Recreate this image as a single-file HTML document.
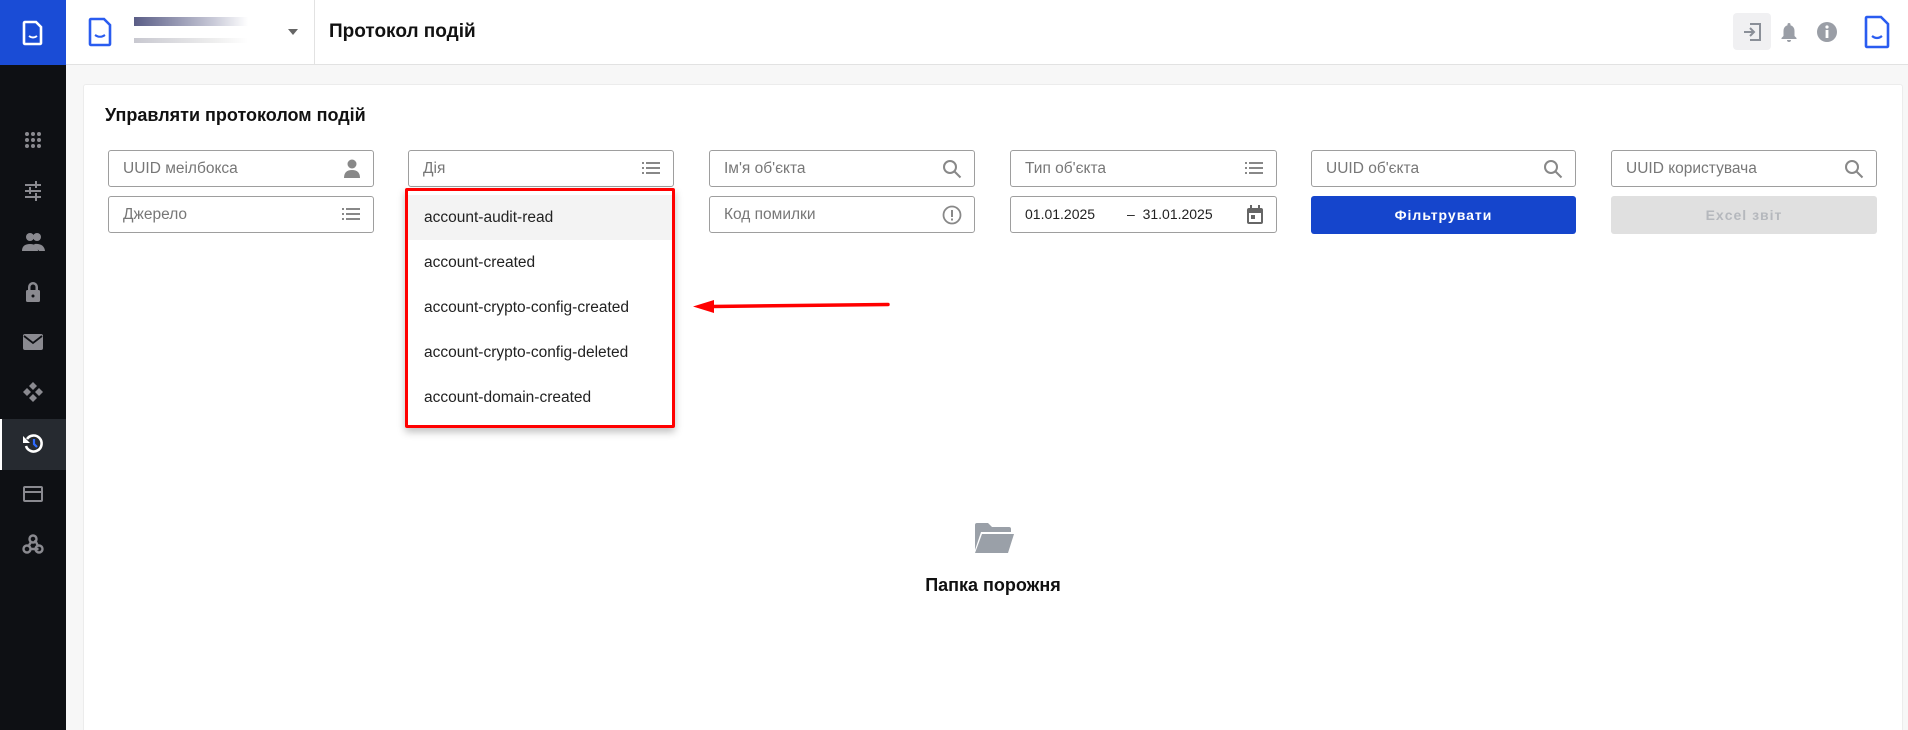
<!DOCTYPE html>
<html><head><meta charset="utf-8"><style>
*{box-sizing:border-box;margin:0;padding:0}
html,body{width:1908px;height:730px;overflow:hidden}
body{background:#f7f7f7;font-family:"Liberation Sans",Roboto,sans-serif;position:relative;color:#222}
.abs{position:absolute}
.sb{left:0;top:0;width:66px;height:730px;background:#0e1014}
.sbtop{left:0;top:0;width:66px;height:65px;background:#1a4cd6}
.hdr{left:66px;top:0;width:1842px;height:65px;background:#fff;border-bottom:1px solid #e2e2e2}
.card{left:83px;top:84px;width:1820px;height:660px;background:#fff;border:1px solid #ececec;border-radius:3px}
.f{position:absolute;height:37px;border:1px solid #9e9e9e;border-radius:3px;background:#fff;font-size:15.5px;color:#777;padding-left:14px;line-height:35px}
.f svg{position:absolute;right:12px;top:8px}
.si{position:absolute;left:22px}
.item{position:absolute;left:3px;width:264px;height:45px;line-height:45px;padding-left:16px;font-size:15.5px;color:#222}
</style></head><body>
<div class="abs sb"></div>
<div class="abs sbtop"></div>
<svg class="abs" style="left:22px;top:20px" width="22" height="26" viewBox="0 0 22 26"><path d="M3 2h11l5 5v16a1 1 0 0 1-1 1H3a1 1 0 0 1-1-1V3a1 1 0 0 1 1-1z" fill="none" stroke="#fff" stroke-width="2.6"/><path d="M7 16q4 3 8 0" fill="none" stroke="#fff" stroke-width="2"/></svg>
<div class="abs" style="left:0;top:419px;width:66px;height:51px;background:#262a30;border-left:2px solid #fff"></div>
<svg class="abs si" style="top:130px" width="22" height="20" viewBox="0 0 22 20" fill="#8a8a90"><g><circle cx="5" cy="4" r="2"/><circle cx="11" cy="4" r="2"/><circle cx="17" cy="4" r="2"/><circle cx="5" cy="10" r="2"/><circle cx="11" cy="10" r="2"/><circle cx="17" cy="10" r="2"/><circle cx="5" cy="16" r="2"/><circle cx="11" cy="16" r="2"/><circle cx="17" cy="16" r="2"/></g></svg>
<svg class="abs si" style="top:181px" width="22" height="20" viewBox="0 0 22 20" fill="#8a8a90"><rect x="3" y="3" width="16" height="2"/><rect x="13" y="0" width="2" height="7"/><rect x="3" y="9" width="16" height="2"/><rect x="7" y="6" width="2" height="7"/><rect x="3" y="15" width="16" height="2"/><rect x="13" y="12" width="2" height="8"/></svg>
<svg class="abs si" style="top:232px" width="24" height="20" viewBox="0 0 24 20" fill="#8a8a90"><circle cx="8" cy="5" r="4"/><circle cx="15" cy="5" r="4"/><path d="M0 19q0-7 8-7t8 7z"/><path d="M12 12q10-1 11 7h-6z"/></svg>
<svg class="abs si" style="top:281px" width="22" height="22" viewBox="0 0 22 22" fill="#8a8a90"><path d="M6 9V6a5 5 0 0 1 10 0v3h-2.5V6a2.5 2.5 0 0 0-5 0v3z"/><rect x="4" y="9" width="14" height="12" rx="1.5"/><circle cx="11" cy="15" r="1.5" fill="#0e1014"/></svg>
<svg class="abs si" style="top:333px" width="22" height="18" viewBox="0 0 22 18" fill="#8a8a90"><rect x="1" y="1" width="20" height="16" rx="2"/><path d="M2 3l9 7 9-7" fill="none" stroke="#0e1014" stroke-width="1.8"/></svg>
<svg class="abs si" style="top:381px" width="22" height="22" viewBox="0 0 22 22" fill="#8a8a90"><path d="M11 1l4 4-4 4-4-4zM11 13l4 4-4 4-4-4zM1 11l4-4 4 4-4 4zM13 11l4-4 4 4-4 4z"/></svg>
<svg class="abs si" style="top:433px" width="22" height="22" viewBox="0 0 22 22"><path d="M5 6a8 8 0 1 1-1 7" fill="none" stroke="#fff" stroke-width="2.6"/><path d="M1 3v7h7z" fill="#fff"/><path d="M12 6v5l3 3" fill="none" stroke="#2f6bff" stroke-width="2.2"/></svg>
<svg class="abs si" style="top:485px" width="22" height="18" viewBox="0 0 22 18" fill="#8a8a90"><rect x="1" y="1" width="20" height="16" rx="2"/><rect x="3" y="3" width="16" height="3" fill="#0e1014"/><rect x="3" y="8" width="16" height="7" fill="#0e1014"/></svg>
<svg class="abs si" style="top:533px" width="22" height="22" viewBox="0 0 22 22" fill="none" stroke="#8a8a90" stroke-width="2.4"><circle cx="11" cy="6" r="3.5"/><circle cx="5" cy="16" r="3.5"/><circle cx="17" cy="16" r="3.5"/><path d="M9 9l-3 5M8.5 16h8M13 7l3 6"/></svg>

<div class="abs hdr"></div>
<svg class="abs" style="left:88px;top:17px" width="24" height="30" viewBox="0 0 24 30"><path d="M3 2h13l6 6v19a1 1 0 0 1-1 1H3a1 1 0 0 1-1-1V3a1 1 0 0 1 1-1z" fill="none" stroke="#2a5cf0" stroke-width="2.6"/><path d="M7 18q5 3.5 10 0" fill="none" stroke="#2a5cf0" stroke-width="2"/></svg>
<div class="abs" style="left:134px;top:17px;width:114px;height:9px;background:linear-gradient(90deg,#5a5d86,#c9cad8 70%,#fff)"></div>
<div class="abs" style="left:134px;top:38px;width:114px;height:5px;background:linear-gradient(90deg,#c8c8d0,#eee 70%,#fff)"></div>
<svg class="abs" style="left:287px;top:28px" width="12" height="8"><path d="M1 1h10L6 7z" fill="#666"/></svg>
<div class="abs" style="left:314px;top:0;width:1px;height:65px;background:#e2e2e2"></div>
<div class="abs" style="left:329px;top:21px;font-size:19px;font-weight:bold;color:#111">Протокол подій</div>
<div class="abs" style="left:1733px;top:13px;width:38px;height:37px;background:#f0f0f2;border-radius:4px"></div>
<svg class="abs" style="left:1741px;top:21px" width="22" height="22" viewBox="0 0 22 22" fill="none" stroke="#8a8f98" stroke-width="2"><path d="M9 3h10v16H9"/><path d="M3 11h10M9 7l4 4-4 4"/></svg>
<svg class="abs" style="left:1780px;top:21px" width="18" height="22" viewBox="0 0 18 22" fill="#9a9ea6"><path d="M9 2a1.5 1.5 0 0 1 1.5 1.5v.8A5.5 5.5 0 0 1 14.5 10v5l2 2v1h-15v-1l2-2v-5a5.5 5.5 0 0 1 4-5.7v-.8A1.5 1.5 0 0 1 9 2zM7 19h4a2 2 0 0 1-4 0z"/></svg>
<svg class="abs" style="left:1816px;top:21px" width="22" height="22" viewBox="0 0 22 22"><circle cx="11" cy="11" r="10" fill="#9a9ea6"/><rect x="9.6" y="9" width="2.8" height="8" fill="#fff"/><circle cx="11" cy="6" r="1.6" fill="#fff"/></svg>
<svg class="abs" style="left:1864px;top:15px" width="26" height="34" viewBox="0 0 26 34"><path d="M3 2h14l7 7v22a1 1 0 0 1-1 1H3a1 1 0 0 1-1-1V3a1 1 0 0 1 1-1z" fill="none" stroke="#2a5cf0" stroke-width="2.6"/><path d="M8 21q5 4 10 0" fill="none" stroke="#2a5cf0" stroke-width="2.2"/></svg>

<div class="abs card" style="height:660px"></div>
<div class="abs" style="left:105px;top:105px;font-size:18px;font-weight:bold;color:#111">Управляти протоколом подій</div>

<div class="f" style="left:108px;top:150px;width:266px">UUID меілбокса<svg width="18" height="20" viewBox="0 0 18 20" fill="#888"><circle cx="9" cy="5" r="4.5"/><path d="M1 19q0-8 8-8t8 8z"/></svg></div>
<div class="f" style="left:108px;top:196px;width:266px">Джерело<svg width="20" height="18" viewBox="0 0 20 18" fill="#888"><rect x="1" y="3" width="2" height="2"/><rect x="5" y="3" width="14" height="2"/><rect x="1" y="8" width="2" height="2"/><rect x="5" y="8" width="14" height="2"/><rect x="1" y="13" width="2" height="2"/><rect x="5" y="13" width="14" height="2"/></svg></div>
<div class="f" style="left:408px;top:150px;width:266px">Дія<svg width="20" height="18" viewBox="0 0 20 18" fill="#888"><rect x="1" y="3" width="2" height="2"/><rect x="5" y="3" width="14" height="2"/><rect x="1" y="8" width="2" height="2"/><rect x="5" y="8" width="14" height="2"/><rect x="1" y="13" width="2" height="2"/><rect x="5" y="13" width="14" height="2"/></svg></div>
<div class="f" style="left:709px;top:150px;width:266px">Ім'я об'єкта<svg width="20" height="20" viewBox="0 0 20 20" fill="none" stroke="#888" stroke-width="2"><circle cx="8" cy="8" r="6"/><path d="M12.5 12.5l6 6"/></svg></div>
<div class="f" style="left:709px;top:196px;width:266px">Код помилки<svg width="20" height="20" viewBox="0 0 20 20"><circle cx="10" cy="10" r="8.5" fill="none" stroke="#888" stroke-width="1.8"/><rect x="9" y="5" width="2" height="7" fill="#888"/><rect x="9" y="13.5" width="2" height="2" fill="#888"/></svg></div>
<div class="f" style="left:1010px;top:150px;width:267px">Тип об'єкта<svg width="20" height="18" viewBox="0 0 20 18" fill="#888"><rect x="1" y="3" width="2" height="2"/><rect x="5" y="3" width="14" height="2"/><rect x="1" y="8" width="2" height="2"/><rect x="5" y="8" width="14" height="2"/><rect x="1" y="13" width="2" height="2"/><rect x="5" y="13" width="14" height="2"/></svg></div>
<div class="f" style="left:1010px;top:196px;width:267px;color:#222;font-size:14px">01.01.2025<span style="position:absolute;left:116px">–&nbsp;&nbsp;31.01.2025</span><svg width="18" height="20" viewBox="0 0 18 20" fill="#666"><rect x="1" y="3" width="16" height="16" rx="2"/><rect x="3" y="8" width="12" height="9" fill="#fff"/><rect x="4" y="0" width="2" height="4"/><rect x="12" y="0" width="2" height="4"/><rect x="5" y="10" width="4" height="4"/></svg></div>
<div class="f" style="left:1311px;top:150px;width:265px">UUID об'єкта<svg width="20" height="20" viewBox="0 0 20 20" fill="none" stroke="#888" stroke-width="2"><circle cx="8" cy="8" r="6"/><path d="M12.5 12.5l6 6"/></svg></div>
<div class="abs" style="left:1311px;top:196px;width:265px;height:38px;background:#1545cc;border-radius:3px;color:#fff;font-weight:bold;font-size:14px;text-align:center;line-height:38px;letter-spacing:1px">Фільтрувати</div>
<div class="f" style="left:1611px;top:150px;width:266px">UUID користувача<svg width="20" height="20" viewBox="0 0 20 20" fill="none" stroke="#888" stroke-width="2"><circle cx="8" cy="8" r="6"/><path d="M12.5 12.5l6 6"/></svg></div>
<div class="abs" style="left:1611px;top:196px;width:266px;height:38px;background:#e0e0e0;border-radius:3px;color:#b5b8bd;font-weight:bold;font-size:14px;text-align:center;line-height:38px;letter-spacing:1px">Excel звіт</div>

<div class="abs" style="left:405px;top:188px;width:270px;height:240px;background:#fff;border:3px solid #f00;border-radius:2px;box-shadow:0 4px 8px rgba(0,0,0,.25)">
<div class="item" style="left:0;top:4px;width:264px;background:#f3f3f3">account-audit-read</div>
<div class="item" style="left:0;top:49px">account-created</div>
<div class="item" style="left:0;top:94px">account-crypto-config-created</div>
<div class="item" style="left:0;top:139px">account-crypto-config-deleted</div>
<div class="item" style="left:0;top:184px">account-domain-created</div>
</div>
<svg class="abs" style="left:690px;top:295px" width="205" height="22"><path d="M198 9.5L22 11.5" stroke="#f00" stroke-width="3.5" stroke-linecap="round"/><path d="M3 11.5L24 5v13z" fill="#f00"/></svg>

<svg class="abs" style="left:973px;top:521px" width="42" height="34" viewBox="0 0 42 34" fill="#9aa0a8"><path d="M2 4a2 2 0 0 1 2-2h11l4 4h17a2 2 0 0 1 2 2v3H8l-6 18z"/><path d="M9 13h32l-6 19H2z"/></svg>
<div class="abs" style="left:893px;top:575px;width:200px;text-align:center;font-size:18px;font-weight:bold;color:#111">Папка порожня</div>
</body></html>
